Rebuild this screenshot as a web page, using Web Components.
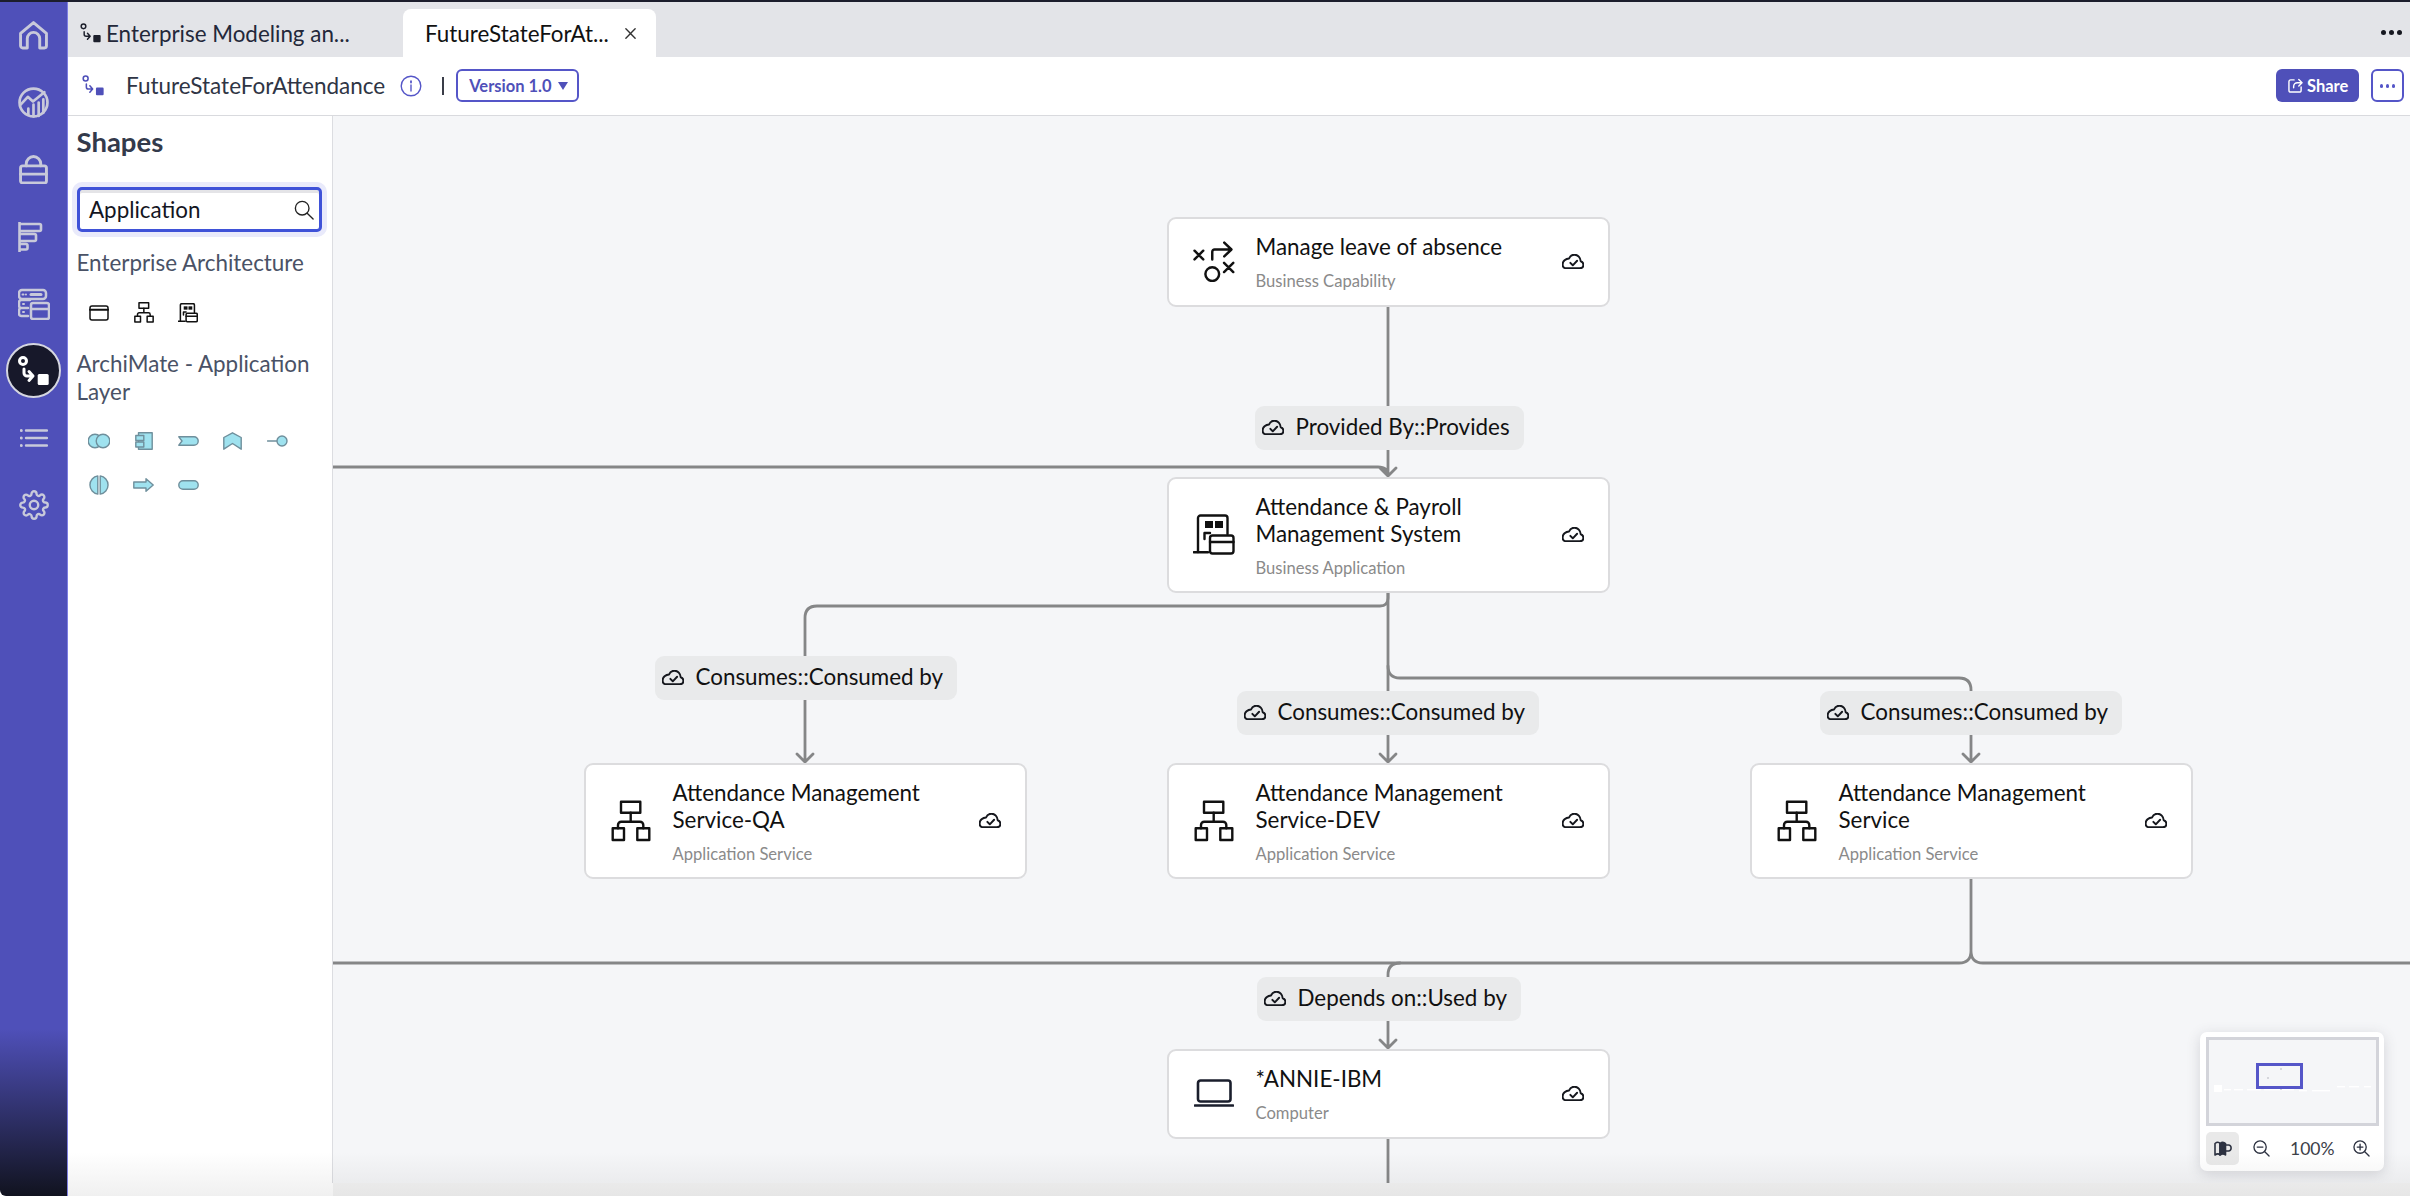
<!DOCTYPE html>
<html lang="en"><head><meta charset="utf-8"><title>FutureStateForAttendance</title>
<style>
html,body{margin:0;padding:0;width:2410px;height:1196px;overflow:hidden;background:#fff;font-family:Lato,"Open Sans",sans-serif}
</style></head><body>
<x-app></x-app>
<script>
const CLOUD=`<path d="M5 14.8H17.5C20 14.8 21.2 13 21.2 11.4 21.2 9.6 20 8.4 18.6 8 18.4 4.4 15.8 1.6 12.6 1.6 10 1.6 8.2 3 7.3 5.2 4 5.2 1 8 1 11 1 13.2 2.6 14.8 5 14.8Z"/><path d="M8.5 9.5l2.4 2.4 4.2-4.4"/>`;
const GEAR="M19.4 15a1.65 1.65 0 0 0 .33 1.82l.06.06a2 2 0 0 1 0 2.83 2 2 0 0 1-2.83 0l-.06-.06a1.65 1.65 0 0 0-1.82-.33 1.65 1.65 0 0 0-1 1.51V21a2 2 0 0 1-2 2 2 2 0 0 1-2-2v-.09A1.65 1.65 0 0 0 9 19.4a1.65 1.65 0 0 0-1.82.33l-.06.06a2 2 0 0 1-2.83 0 2 2 0 0 1 0-2.83l.06-.06a1.65 1.65 0 0 0 .33-1.82 1.65 1.65 0 0 0-1.51-1H3a2 2 0 0 1-2-2 2 2 0 0 1 2-2h.09A1.65 1.65 0 0 0 4.6 9a1.65 1.65 0 0 0-.33-1.82l-.06-.06a2 2 0 0 1 0-2.83 2 2 0 0 1 2.83 0l.06.06a1.65 1.65 0 0 0 1.82.33H9a1.65 1.65 0 0 0 1-1.51V3a2 2 0 0 1 2-2 2 2 0 0 1 2 2v.09a1.65 1.65 0 0 0 1 1.51 1.65 1.65 0 0 0 1.82-.33l.06-.06a2 2 0 0 1 2.83 0 2 2 0 0 1 0 2.83l-.06.06a1.65 1.65 0 0 0-.33 1.82V9a1.65 1.65 0 0 0 1.51 1H21a2 2 0 0 1 2 2 2 2 0 0 1-2 2h-.09a1.65 1.65 0 0 0-1.51 1z";
const BIZAPP=`<path d="M5 38V4A2.5 2.5 0 0 1 7.5 1.5H32A2.5 2.5 0 0 1 34.5 4V20"/><path d="M.7 38.3H15"/><rect x="12" y="7" width="8" height="7" fill="currentColor" stroke="none"/><rect x="22" y="7" width="8" height="7" fill="currentColor" stroke="none"/><path d="M11.5 25V19H17"/><rect x="17" y="21.5" width="23.5" height="18" rx="2.5"/><path d="M17 28H40.5"/>`;
const HIER=`<rect x="10" y="1.7" width="19.3" height="11"/><path d="M19.7 12.7V21.7M7 28.3V25A3.3 3.3 0 0 1 10.3 21.7H29A3.3 3.3 0 0 1 32.3 25V28.3"/><rect x="1.7" y="28.3" width="11.3" height="11.7"/><rect x="26.3" y="28.3" width="12" height="11.7"/>`;
const MODEL=`<circle cx="5" cy="5" r="3.5"/><path d="M6 13V17A3 3 0 0 0 9 20H14M11 15.5L15 20 11 24.5" fill="none"/><rect x="19.7" y="18" width="11" height="11" rx="1.5" fill="currentColor" stroke="none"/>`;
const CY='fill="#9fe2ef" stroke="#6f8f9c" stroke-width="1.4"';
const ICONS={
 cloud:{vb:"0.4 1 21.4 14.4",s:1.9,b:CLOUD},
 capability:{vb:"0 0 40 40",s:2.4,b:`<path d="M1 9.5L9.5 18M9.5 9.5L1 18M18.3 18V10.5A2.2 2.2 0 0 1 20.5 8.3H36.6M30 1.6L37 8.3 30 15M29.8 21.3L38.8 30.3M38.8 21.3L29.8 30.3"/><circle cx="18.3" cy="32.3" r="6.7"/>`},
 bizapp:{vb:"0 0 42 42",s:2.4,b:BIZAPP},
 hier:{vb:"0 0 40 42",s:2.4,b:HIER},
 laptop:{vb:"0 0 40 30",s:2.6,b:`<rect x="4" y="1.5" width="32.5" height="21" rx="2.5"/><path d="M1 26.5H39"/>`},
 model:{vb:"0 0 31 30",s:3,b:MODEL},
 modelthin:{vb:"0 0 31 30",s:2.2,b:MODEL},
 home:{vb:"0 0 28 28",s:2.8,b:`<path d="M1.5 12L14 1.5 26.5 12V24A2 2 0 0 1 24.5 26H20V17A6 6 0 0 0 8 17V26H3.5A2 2 0 0 1 1.5 24Z"/>`},
 analytics:{vb:"0 0 30 30",s:2.6,b:`<circle cx="15" cy="15" r="13.5"/><path d="M2.5 17L9.5 9.5 14.5 14 25.5 5M10 21V27M15 17V28.5M20 15V28M24.5 12V25"/>`},
 bag:{vb:"0 0 28 28",s:2.8,b:`<rect x="1.5" y="10.5" width="25" height="16.5" rx="2"/><path d="M1.5 18.5H26.5M7 10.5V8.5A7 7 0 0 1 21 8.5V10.5"/>`},
 bars:{vb:"0 0 25 30",s:2.6,b:`<path d="M1.5 2H21.5A1.5 1.5 0 0 1 23 3.5V7.5A1.5 1.5 0 0 1 21.5 9H1.5M1.5 12H16.5A1.5 1.5 0 0 1 18 13.5V17.5A1.5 1.5 0 0 1 16.5 19H1.5M1.5 22H8A1.5 1.5 0 0 1 9.5 23.5V26A1.5 1.5 0 0 1 8 27.5H1.5M1.5 0V30"/>`},
 servers:{vb:"0 0 32 32",s:2.5,b:`<g transform="translate(0 1)"><rect x="1" y="1" width="27" height="9" rx="3"/><path d="M4.5 5.5H8" stroke-dasharray="1 2.4" stroke-width="2"/><path d="M13 5.5H23" stroke-width="3"/><path d="M12 11H3.5A2.5 2.5 0 0 0 1 13.5V16.5A2.5 2.5 0 0 0 3.5 19H10M3.5 19A2.5 2.5 0 0 0 1 21.5V24.5A2.5 2.5 0 0 0 3.5 27H10"/><path d="M5 15H8M5 23H8" stroke-dasharray="1 2.4" stroke-width="2"/><rect x="13" y="14" width="18" height="16" rx="2"/><path d="M13 20H31"/></g>`},
 list:{vb:"0 0 28 20",s:2.4,b:`<path d="M6 2.5H27M6 10H27M6 17.5H27"/><path d="M1.2 2.5H1.3M1.2 10H1.3M1.2 17.5H1.3" stroke-width="3"/>`},
 gear:{vb:"0 0 24 24",s:1.9,b:`<circle cx="12" cy="12" r="3.4"/><path d="${GEAR}"/>`},
 search:{vb:"0 0 22 22",s:1.5,b:`<circle cx="9" cy="9" r="7.5"/><path d="M14.5 14.5L21 21"/>`},
 close:{vb:"0 0 14 14",s:1.5,b:`<path d="M2 2L12 12M12 2L2 12"/>`},
 info:{vb:"0 0 22 22",s:1.4,b:`<circle cx="11" cy="11" r="9.8"/><path d="M11 10V16"/><path d="M11 6.2V7.6" stroke-width="1.8"/>`},
 share:{vb:"0 0 16 16",s:1.5,b:`<path d="M6.5 2H3A2 2 0 0 0 1 4V13A2 2 0 0 0 3 15H12A2 2 0 0 0 14 13V9.5"/><path d="M6 10.5V9A4 4 0 0 1 10 5H15M11.5 1.5L15 5 11.5 8.5"/>`},
 window:{vb:"0 0 20 16",s:1.5,b:`<rect x="1" y="1" width="18" height="14" rx="2"/><path d="M1 4.8H19" stroke-width="2"/>`},
 zoomout:{vb:"0 0 18 18",s:1.4,b:`<circle cx="7.5" cy="7.5" r="6.5"/><path d="M12.2 12.2L17 17M4.5 7.5H10.5"/>`},
 zoomin:{vb:"0 0 18 18",s:1.4,b:`<circle cx="7.5" cy="7.5" r="6.5"/><path d="M12.2 12.2L17 17M4.5 7.5H10.5M7.5 4.5V10.5"/>`},
 mapbook:{vb:"0 0 18 16",s:1.6,b:`<path d="M1 2.5C3 .8 5 .8 6 2.5V14C5 12.5 3 12.5 1 14Z"/><path d="M6 2.5C8 .8 10 1 11.5 2.5V14C10 12.5 8 12.5 6 14Z" fill="currentColor"/><path d="M11.5 4H14.5A2.5 2.5 0 0 1 17 7 2.5 2.5 0 0 1 14.5 10H11.5"/>`},
 a1:{vb:"0 0 22 18",raw:`<circle cx="7" cy="9" r="6.8" ${CY}/><circle cx="15" cy="9" r="6.8" ${CY}/>`},
 a2:{vb:"0 0 18 18",raw:`<path d="M3.5 .8H17.2V17.2H3.5Z" ${CY}/><rect x=".8" y="3.5" width="8" height="5" ${CY}/><rect x=".8" y="10" width="8" height="5" ${CY}/>`},
 a3:{vb:"0 0 21 10",raw:`<path d="M.8 .8H16A4.2 4.2 0 0 1 16 9.2H.8L4 5Z" ${CY}/>`},
 a4:{vb:"0 0 19 18",raw:`<path d="M.8 5.5L9.5 .8 18.2 5.5V17.2L9.5 11.5.8 17.2Z" ${CY}/>`},
 a5:{vb:"0 0 21 12",raw:`<path d="M.5 6H10" stroke="#6f8f9c" stroke-width="1.4" fill="none"/><circle cx="15" cy="6" r="5" ${CY}/>`},
 a6:{vb:"0 0 20 20",raw:`<path d="M8.8 .9A9.2 9.2 0 0 0 8.8 19.1Z" ${CY}/><path d="M11.2 .9A9.2 9.2 0 0 1 11.2 19.1Z" ${CY}/>`},
 a7:{vb:"0 0 21 14",raw:`<path d="M.8 4H13V.8L20.2 7 13 13.2V10H.8Z" ${CY}/>`},
 a8:{vb:"0 0 21 10",raw:`<rect x=".8" y=".8" width="19.4" height="8.4" rx="4.2" ${CY}/>`}
};
function def(name,html,extra){
 const t=document.createElement('template');t.innerHTML=html;
 customElements.define(name,class extends HTMLElement{
  constructor(){super();this.attachShadow({mode:'open'}).appendChild(t.content.cloneNode(true));}
  connectedCallback(){extra&&extra.call(this);}
 });
}
def('x-icon',`<style>:host{display:inline-flex;flex:none;line-height:0}svg{display:block;width:100%;height:100%;fill:none;stroke:currentColor;stroke-linecap:round;stroke-linejoin:round}</style><svg></svg>`,function(){
 const i=ICONS[this.getAttribute('name')],s=this.shadowRoot.querySelector('svg');
 s.setAttribute('viewBox',i.vb);if(i.s)s.setAttribute('stroke-width',this.getAttribute('sw')||i.s);s.innerHTML=i.raw||i.b;
});
def('x-rail',`<style>
:host{display:flex;flex-direction:column;width:67px;flex:none;box-sizing:content-box;border-right:1px solid #7d7ee2;color:#c8c9da;background:linear-gradient(#4f50b9 0,#4f50b9 86%,#11131f 100%);border-bottom-left-radius:6px}
.i{height:67px;display:flex;align-items:center;justify-content:center}
.on{width:51px;height:51px;border-radius:50%;background:#17182a;border:2px solid #d5d6e0;display:flex;align-items:center;justify-content:center;color:#fff}
</style>
<div class="i"><x-icon name="home" style="width:29px;height:29px"></x-icon></div>
<div class="i"><x-icon name="analytics" style="width:31px;height:31px"></x-icon></div>
<div class="i"><x-icon name="bag" style="width:29px;height:29px"></x-icon></div>
<div class="i"><x-icon name="bars" style="width:25px;height:30px;margin-right:6px"></x-icon></div>
<div class="i"><x-icon name="servers" style="width:32px;height:32px"></x-icon></div>
<div class="i"><div class="on"><x-icon name="model" style="width:31px;height:30px"></x-icon></div></div>
<div class="i"><x-icon name="list" style="width:28px;height:20px"></x-icon></div>
<div class="i"><x-icon name="gear" style="width:30px;height:30px"></x-icon></div>`);
def('x-tab',`<style>
:host{display:flex;align-items:center;box-sizing:border-box;height:48px;font-size:22.4px;color:#23283a;white-space:nowrap}
:host([active]){background:#fff;border-radius:8px 8px 0 0;color:#111;width:253px;padding:0 19px 0 22px;justify-content:space-between}
:host(:not([active])){width:335px;padding-left:12px;gap:5px}
</style><slot name="icon"></slot><slot></slot><slot name="end"></slot>`);
def('x-tabbar',`<style>
:host{display:flex;align-items:flex-end;height:55px;flex:none;background:#e3e4e8;position:relative}
.more{margin-left:auto;align-self:center;display:flex;gap:3px;padding:6px 8px 0 0}
.more i{width:5px;height:5px;border-radius:50%;background:#15171f}
</style><slot></slot><div class="more"><i></i><i></i><i></i></div>`);
def('x-toolbar',`<style>
:host{display:flex;align-items:center;height:57.5px;flex:none;box-sizing:content-box;background:#fff;border-bottom:1.5px solid #d9dade;padding:0 6px 0 14px;font-size:22.5px;color:#2f3545}
.t{margin-left:22px;white-space:nowrap}
.info{margin-left:15px;width:22px;height:22px;color:#5556c8}
.sep{width:2px;height:18px;background:#3a3d48;margin:0 12px 0 20px}
.btn{height:33px;box-sizing:border-box;border-radius:6px;display:flex;align-items:center;font-size:16.5px;font-weight:700}
.ver{width:123px;border:2px solid #5556c8;color:#4f50b9;padding-left:11px;gap:6px}
.ver b{width:0;height:0;border:5.5px solid transparent;border-top:8px solid #4f50b9;border-bottom:0}
.share{margin-left:auto;width:83px;background:#4f50b9;color:#fff;padding-left:12px;gap:4px}
.dots{margin-left:12px;width:33px;border:2px solid #5556c8;justify-content:center;gap:2.5px}
.dots i{width:3.5px;height:3.5px;background:#5556c8;border-radius:50%}
</style>
<x-icon name="modelthin" style="width:22px;height:21px;color:#4f50b9"></x-icon>
<span class="t">FutureStateForAttendance</span>
<x-icon class="info" name="info"></x-icon><span class="sep"></span>
<div class="btn ver">Version 1.0<b></b></div>
<div class="btn share"><x-icon name="share" style="width:15px;height:15px"></x-icon>Share</div>
<div class="btn dots"><i></i><i></i><i></i></div>`);
def('x-search',`<style>
:host{display:flex;align-items:center;box-sizing:border-box;width:245px;height:45px;margin-left:9px;border:3px solid #3f52d8;border-radius:5px;background:#fff;box-shadow:0 0 0 5px #e9eafb,inset 0 3px 0 #e4e4e7;padding:0 5px 0 9px;font-size:22.4px;color:#14161f}
span{flex:1}
</style><span><slot></slot></span><x-icon name="search" style="width:20px;height:20px;color:#222"></x-icon>`);
def('x-shape-grid',`<style>:host{display:grid;grid-template-columns:repeat(5,44.5px);grid-auto-rows:44px}
::slotted(x-icon){place-self:center}</style><slot></slot>`);
def('x-shapes',`<style>
:host{display:block;width:263.5px;flex:none;box-sizing:content-box;background:#fff;border-right:1.5px solid #dcdde1;color:#4a5266;font-size:22.4px}
h2{margin:10.5px 0 29px 8.5px;font-size:27.5px;line-height:32px;font-weight:700;color:#333a4b}
h3{margin:0 0 0 8.5px;font-weight:400;font-size:22.4px;line-height:28px}
.c{margin-left:9px}
</style>
<h2>Shapes</h2>
<x-search>Application</x-search>
<h3 style="margin-top:16.5px">Enterprise Architecture</h3>
<x-shape-grid class="c" style="margin-top:14px">
<x-icon name="window" style="width:20px;height:16px;color:#111"></x-icon>
<x-icon name="hier" sw="3" style="width:20px;height:21px;color:#111"></x-icon>
<x-icon name="bizapp" sw="3.2" style="width:20px;height:20px;color:#111"></x-icon>
</x-shape-grid>
<h3 style="margin-top:15.5px">ArchiMate - Application Layer</h3>
<x-shape-grid class="c" style="margin-top:12.5px">
<x-icon name="a1" style="width:22px;height:18px"></x-icon>
<x-icon name="a2" style="width:18px;height:18px"></x-icon>
<x-icon name="a3" style="width:21px;height:10px"></x-icon>
<x-icon name="a4" style="width:19px;height:18px"></x-icon>
<x-icon name="a5" style="width:21px;height:12px"></x-icon>
<x-icon name="a6" style="width:20px;height:20px"></x-icon>
<x-icon name="a7" style="width:21px;height:14px"></x-icon>
<x-icon name="a8" style="width:21px;height:10px"></x-icon>
</x-shape-grid>`);
def('x-node',`<style>
:host{position:absolute;display:flex;align-items:center;box-sizing:border-box;width:443px;background:#fff;border:2px solid #dcdcde;border-radius:9px;color:#111;z-index:2}
.ic{width:87px;flex:none;display:flex;justify-content:center;box-sizing:border-box;padding-left:3px}
.tx{flex:1;min-width:0;align-self:flex-start;padding-top:14px}
.ti{font-size:22.4px;line-height:27.5px}
.su{font-size:16.6px;line-height:19px;color:#8a8a8a;margin-top:11.5px}
.cl{flex:none;width:22px;height:15px;margin-right:24px;color:#15171d}
</style><div class="ic"><slot name="icon"></slot></div><div class="tx"><div class="ti"><slot></slot></div><div class="su"><slot name="sub"></slot></div></div><x-icon class="cl" name="cloud"></x-icon>`);
def('x-edge-label',`<style>
:host{position:absolute;display:flex;align-items:center;box-sizing:border-box;height:44px;background:#e9eaeb;border-radius:9px;padding:0 14px 2px 7px;font-size:22.4px;color:#111;white-space:nowrap;gap:12px;z-index:2}
x-icon{width:22px;height:15px;color:#15171d;margin-top:2px}
</style><x-icon name="cloud"></x-icon><slot></slot>`);
def('x-minimap',`<style>
:host{position:absolute;right:26px;bottom:12px;width:184px;height:139px;box-sizing:border-box;padding:5px 5px 0 6px;background:#fff;border-radius:7px;box-shadow:0 3px 14px rgba(60,60,80,.18);z-index:3;display:flex;flex-direction:column;gap:6px}
.m{height:89px;box-sizing:border-box;border:3px solid #d3d4da;background:#f5f6f8;position:relative;overflow:hidden}
.m svg{position:absolute;inset:0;width:100%;height:100%}
.v{position:absolute;left:47px;top:23px;width:47px;height:26px;box-sizing:border-box;border:3px solid #5556c8}
.r{display:flex;align-items:center;height:33px;color:#2c3140}
.b{width:33px;height:33px;display:flex;align-items:center;justify-content:center;border-radius:5px}
.a{background:#e9e9e9}
.p{font-size:17.5px;color:#3c4048;margin:0 15px 0 12px;width:42px;text-align:center}
</style>
<div class="m"><svg viewBox="0 0 167 83"><g fill="#fff"><rect x="5" y="45" width="8" height="7"/><rect x="15" y="49" width="7" height="1.4"/><rect x="25" y="49" width="9" height="1.4"/><rect x="38" y="49" width="14" height="1.4"/><rect x="55" y="49" width="30" height="1.4"/><rect x="90" y="50" width="8" height="1.4"/><rect x="103" y="50" width="18" height="1.4"/><rect x="128" y="46" width="8" height="1.4"/><rect x="140" y="46" width="10" height="1.4"/><rect x="155" y="46" width="7" height="1.4"/></g><g fill="#d6d7dc"><rect x="58" y="37" width="2" height="2"/><rect x="71" y="28" width="2" height="2"/><rect x="71" y="48" width="2" height="2"/></g></svg><div class="v"></div></div>
<div class="r"><div class="b a"><x-icon name="mapbook" style="width:18px;height:16px"></x-icon></div><div class="b" style="margin-left:6px"><x-icon name="zoomout" style="width:17px;height:17px"></x-icon></div><span class="p">100%</span><div class="b" style="margin-left:-2px"><x-icon name="zoomin" style="width:17px;height:17px"></x-icon></div></div>`);
def('x-canvas',`<style>
:host{display:block;flex:1;position:relative;background:#f5f6f8;overflow:hidden}
svg{position:absolute;left:0;top:0;width:2077px;height:1067px;fill:none;stroke:#858687;stroke-width:2.8;stroke-linecap:round;stroke-linejoin:round;z-index:1}
</style>
<svg viewBox="333 116 2077 1067">
<path d="M1388 307V476M333 467H1378Q1388 467 1388 476M1380 468L1388 476 1396 468"/>
<path d="M1388 593V598Q1388 606 1380 606H817Q805 606 805 618V762M797 754L805 762 813 754"/>
<path d="M1388 593V762M1380 754L1388 762 1396 754"/>
<path d="M1388 666Q1388 678 1400 678H1959Q1971 678 1971 690V762M1963 754L1971 762 1979 754"/>
<path d="M1971 879V951Q1971 963 1959 963H333M1971 951Q1971 963 1983 963H2410"/>
<path d="M1400 963Q1388 963 1388 975V1048M1380 1040L1388 1048 1396 1040"/>
<path d="M1388 1139V1183"/>
</svg><slot></slot>`);
def('x-app',`<style>
:host{display:flex;width:2410px;height:1196px;box-sizing:border-box;border-top:2px solid #1c1d2c;position:relative;overflow:hidden}
.main{flex:1;display:flex;flex-direction:column;min-width:0}
.work{flex:1;display:flex;min-height:0}
.foot{height:13px;flex:none;background:linear-gradient(90deg,#fff 0,#fff 265px,#f4f4f4 265px)}
.shade{position:absolute;left:68px;right:0;bottom:0;height:44px;background:linear-gradient(rgba(90,90,90,0),rgba(90,90,90,.09));pointer-events:none;z-index:5}
</style>
<x-rail></x-rail>
<div class="main">
<x-tabbar>
<x-tab><x-icon slot="icon" name="modelthin" style="width:21px;height:20px;color:#1c1f2b"></x-icon>Enterprise Modeling an...</x-tab>
<x-tab active>FutureStateForAt...<x-icon slot="end" name="close" style="width:13px;height:13px;color:#333"></x-icon></x-tab>
</x-tabbar>
<x-toolbar></x-toolbar>
<div class="work">
<x-shapes></x-shapes>
<x-canvas>
<x-node style="left:834px;top:101px;height:90px"><x-icon slot="icon" name="capability" style="width:42px;height:41px"></x-icon>Manage leave of absence<span slot="sub">Business Capability</span></x-node>
<x-edge-label style="left:922px;top:290px">Provided By::Provides</x-edge-label>
<x-node style="left:834px;top:361px;height:116px"><x-icon slot="icon" name="bizapp" style="width:42px;height:42px"></x-icon>Attendance &amp; Payroll<br>Management System<span slot="sub">Business Application</span></x-node>
<x-edge-label style="left:322px;top:540px">Consumes::Consumed by</x-edge-label>
<x-edge-label style="left:904px;top:575px">Consumes::Consumed by</x-edge-label>
<x-edge-label style="left:1487px;top:575px">Consumes::Consumed by</x-edge-label>
<x-node style="left:251px;top:647px;height:116px"><x-icon slot="icon" name="hier" style="width:40px;height:42px"></x-icon>Attendance Management<br>Service-QA<span slot="sub">Application Service</span></x-node>
<x-node style="left:834px;top:647px;height:116px"><x-icon slot="icon" name="hier" style="width:40px;height:42px"></x-icon>Attendance Management<br>Service-DEV<span slot="sub">Application Service</span></x-node>
<x-node style="left:1417px;top:647px;height:116px"><x-icon slot="icon" name="hier" style="width:40px;height:42px"></x-icon>Attendance Management<br>Service<span slot="sub">Application Service</span></x-node>
<x-edge-label style="left:924px;top:861px">Depends on::Used by</x-edge-label>
<x-node style="left:834px;top:933px;height:90px"><x-icon slot="icon" name="laptop" style="width:40px;height:30px;color:#1a1e2c"></x-icon>*ANNIE-IBM<span slot="sub">Computer</span></x-node>
<x-minimap></x-minimap>
</x-canvas>
</div>
<div class="foot"></div>
</div>
<div class="shade"></div>`);
</script>
</body></html>
